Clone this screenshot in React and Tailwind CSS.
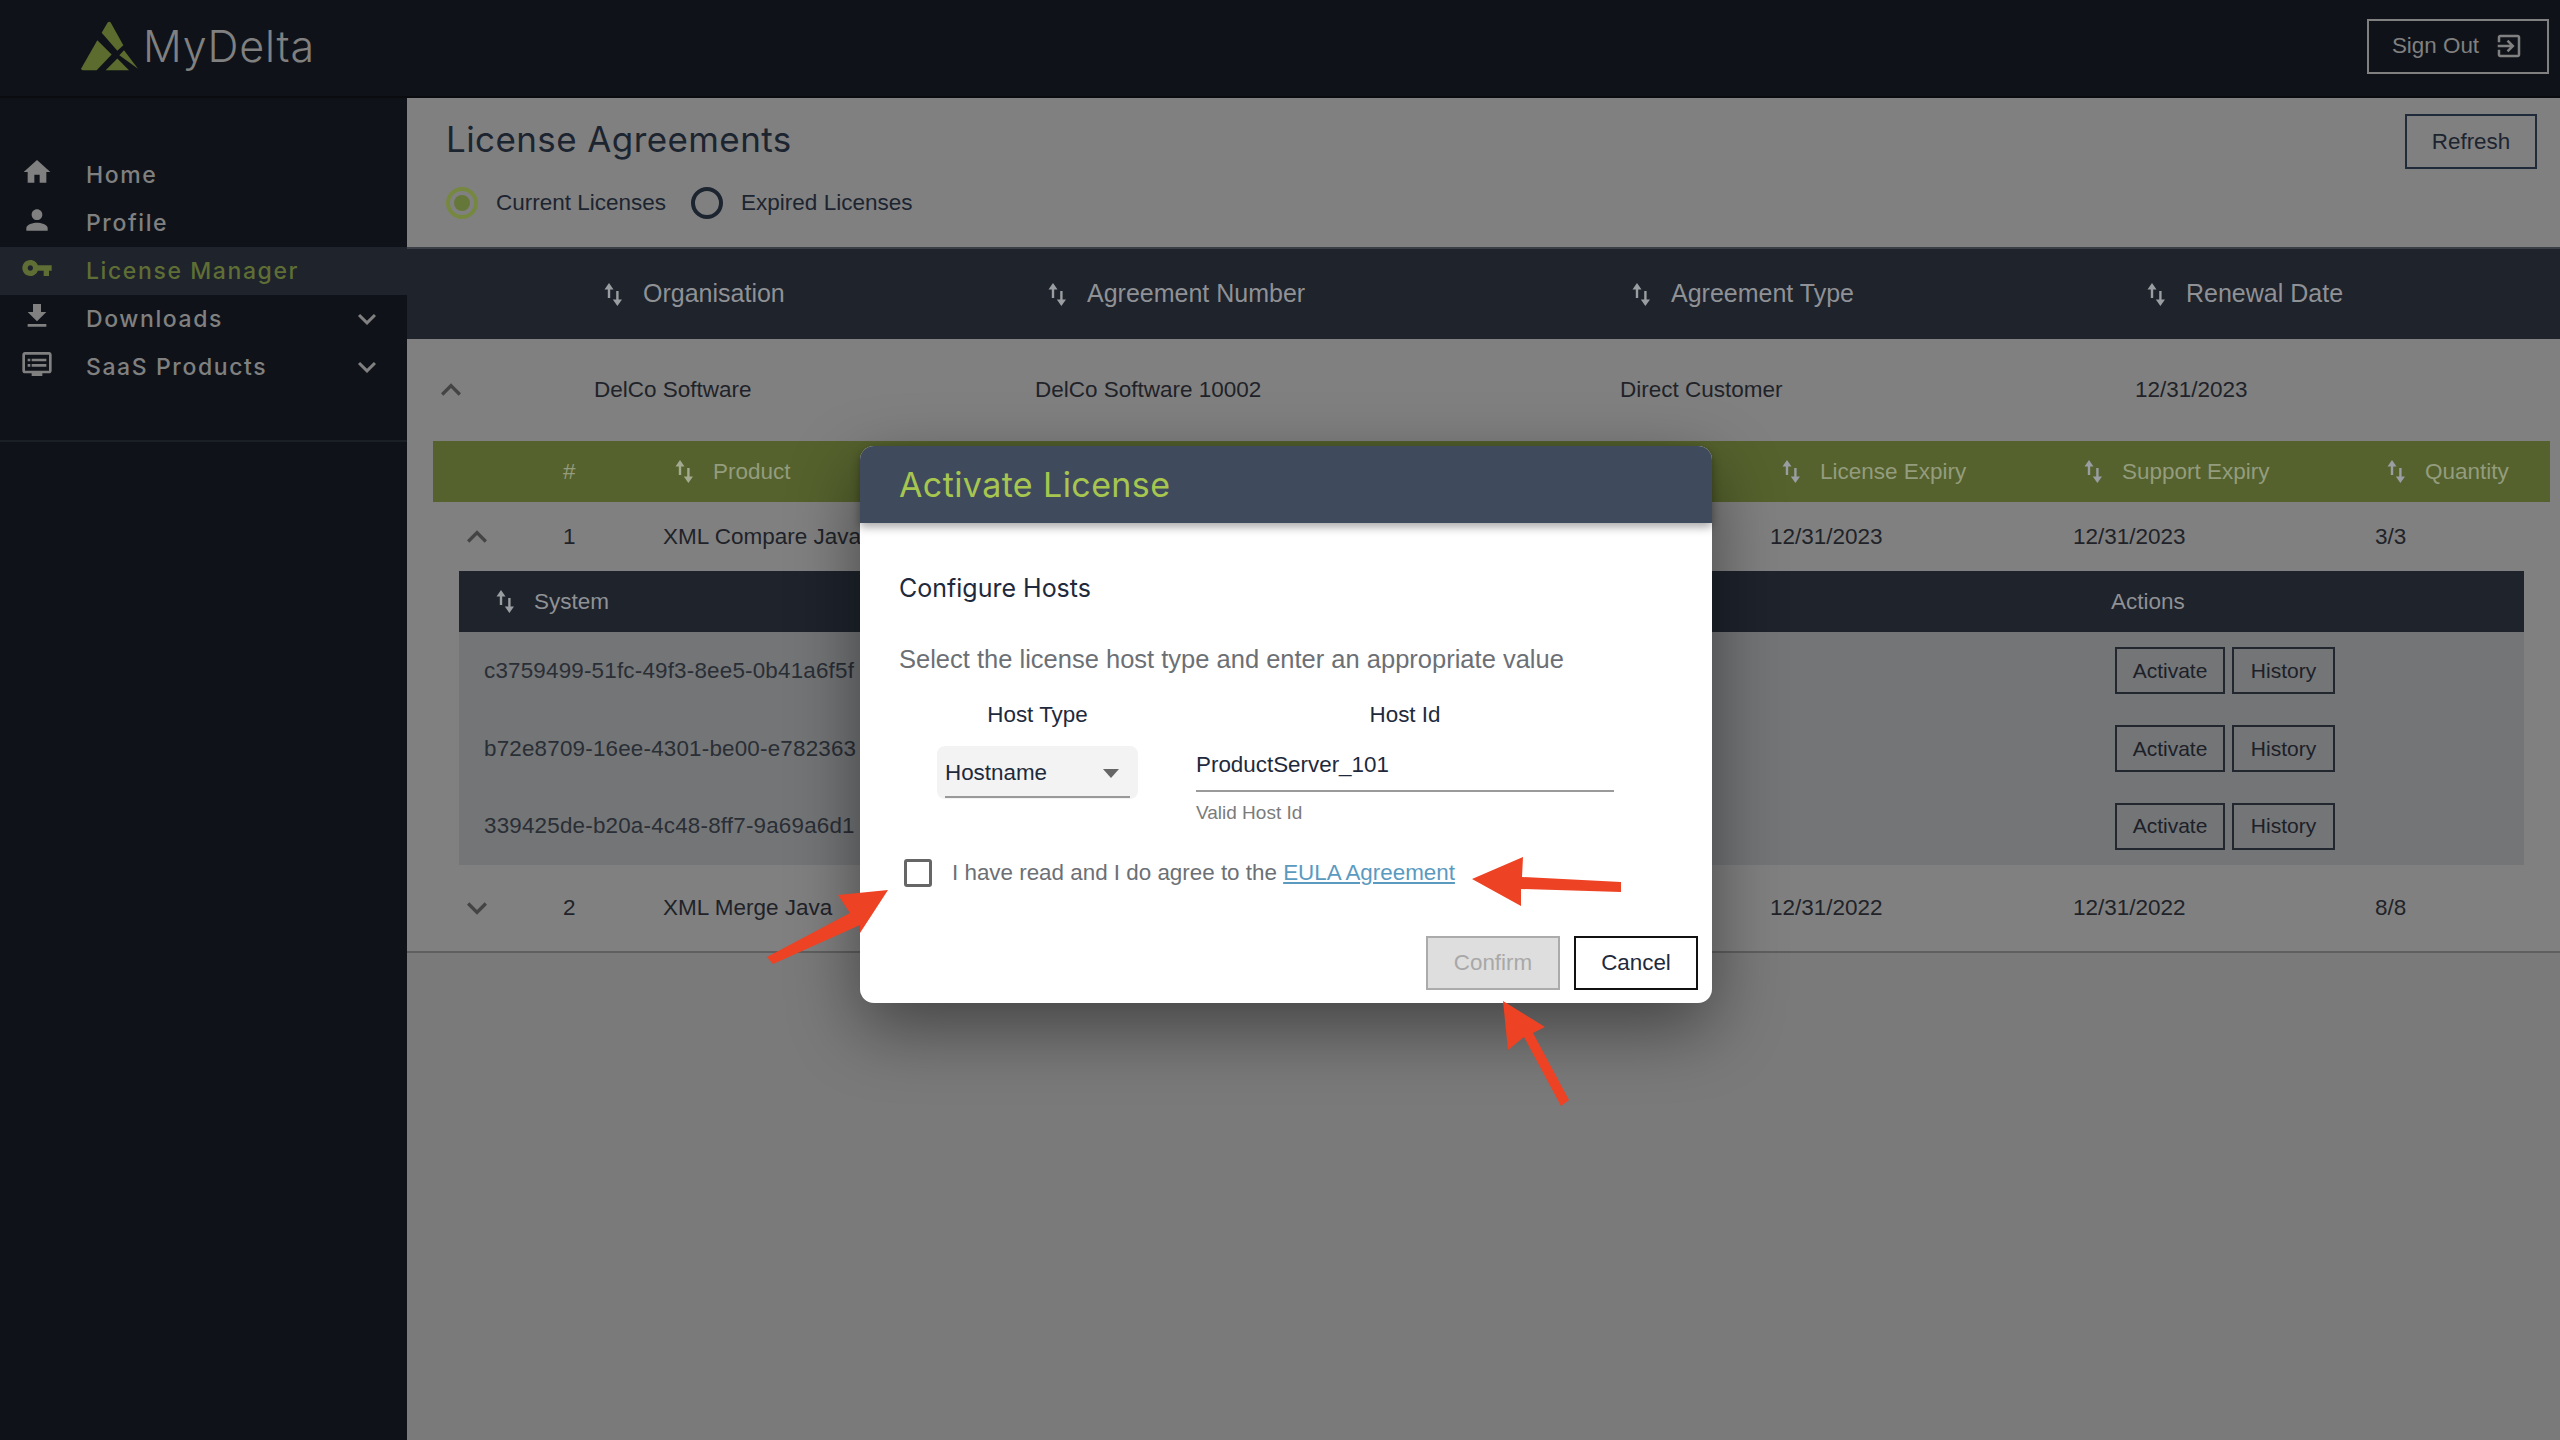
const sans = "font-['Liberation_Sans',Arial,sans-serif]";
const round = "font-['Inter',sans-serif]";

const Mui = ({ d, className }) => (
  <svg viewBox="0 0 24 24" fill="currentColor" className={className}>
    <path d={d} />
  </svg>
);

const paths = {
  home: "M10 20v-6h4v6h5v-8h3L12 3 2 12h3v8z",
  person:
    "M12 12c2.21 0 4-1.79 4-4s-1.79-4-4-4-4 1.79-4 4 1.79 4 4 4zm0 2c-2.67 0-8 1.34-8 4v2h16v-2c0-2.66-5.33-4-8-4z",
  key: "M12.65 10C11.83 7.67 9.61 6 7 6c-3.31 0-6 2.69-6 6s2.69 6 6 6c2.61 0 4.83-1.67 5.65-4H17v4h4v-4h2v-4H12.65zM7 14c-1.1 0-2-.9-2-2s.9-2 2-2 2 .9 2 2-.9 2-2 2z",
  download: "M19 9h-4V3H9v6H5l7 7 7-7zM5 18v2h14v-2H5z",
  dvr: "M21 3H3c-1.1 0-2 .9-2 2v12c0 1.1.9 2 2 2h5v2h8v-2h5c1.1 0 1.99-.9 1.99-2L23 5c0-1.1-.9-2-2-2zm0 14H3V5h18v12zm-2-9H8v2h11V8zm0 4H8v2h11v-2zM7 8H5v2h2V8zm0 4H5v2h2v-2z",
  down: "M16.59 8.59L12 13.17 7.41 8.59 6 10l6 6 6-6z",
  up: "M12 8l-6 6 1.41 1.41L12 10.83l4.59 4.58L18 14z",
  exit: "M10.09 15.59L11.5 17l5-5-5-5-1.41 1.41L12.67 11H3v2h9.67l-2.58 2.59zM19 3H5c-1.11 0-2 .9-2 2v4h2V5h14v14H5v-4H3v4c0 1.1.89 2 2 2h14c1.1 0 2-.9 2-2V5c0-1.1-.9-2-2-2z",
};

const SortIcon = ({ className }) => (
  <svg viewBox="0 0 18 23" fill="currentColor" className={`w-[18px] h-[23px] shrink-0 ${className}`}>
    <path d="M0.5 6.5L5 0l4.5 6.5H6.2V15H3.8V6.5z" />
    <path d="M12.2 8h2.4v8.5H18L13.4 23l-4.6-6.5h3.4z" />
  </svg>
);

const Logo = () => (
  <svg viewBox="60 60 180 155" className="w-[60px] h-[52px]" fill="#5c6c2f">
    <path d="M125 98L143 67q5-5 9 0L190 135 172 152z" />
    <path d="M112 120L155 163 110 210H68q-6-1-4-6z" />
    <path d="M172 175L207 210H137z" />
    <path d="M178 165L192 150 234 206z" />
  </svg>
);

const NavItem = ({ icon, label, active, chevron }) => (
  <div className={`flex items-center h-[48px] ${active ? "bg-[#1e232c] text-[#5f6e34]" : "text-[#808080]"}`}>
    <div className="w-[86px] pl-[21px] -mt-[6px]">
      <Mui d={icon} className="w-[32px] h-[32px]" />
    </div>
    <span className={`${round} text-[23px] font-medium tracking-[1.6px] flex-1`}>{label}</span>
    {chevron && <Mui d={paths.down} className="w-[36px] h-[36px] mr-[22px] text-[#808080]" />}
  </div>
);

const Sidebar = () => (
  <aside className="w-[407px] shrink-0 bg-[#0f1319]">
    <nav className="pt-[53px] pb-[49px] border-b-2 border-[#1a1e25]">
      <NavItem icon={paths.home} label="Home" />
      <NavItem icon={paths.person} label="Profile" />
      <NavItem icon={paths.key} label="License Manager" active />
      <NavItem icon={paths.download} label="Downloads" chevron />
      <NavItem icon={paths.dvr} label="SaaS Products" chevron />
    </nav>
  </aside>
);

const Radio = ({ checked, label }) => (
  <label className="flex items-center gap-[18px]">
    <span
      className={`w-[32px] h-[32px] rounded-full border-[4px] flex items-center justify-center ${
        checked ? "border-[#76883f]" : "border-[#1c2430]"
      }`}
    >
      {checked && <span className="w-[16px] h-[16px] rounded-full bg-[#66773a]" />}
    </span>
    <span className="text-[22.5px] text-[#1c2430]">{label}</span>
  </label>
);

const HeadCell = ({ label, offset }) => (
  <div className={`flex items-center gap-[21px] ${offset}`}>
    <SortIcon className="text-[#9a9da1]" />
    <span>{label}</span>
  </div>
);

const topCols = "grid grid-cols-[187px_441px_585px_515px_1fr] items-center";
const subCols = "grid grid-cols-[130px_100px_1107px_303px_302px_1fr] items-center";

const ActionButton = ({ children, className }) => (
  <button className={`h-[47px] border-2 border-[#22262e] text-[21px] text-[#1c2028] ${className}`}>{children}</button>
);

const SystemRow = ({ id }) => (
  <div className="flex items-center h-[77.67px]">
    <span className="flex-1 pl-[25px] text-[22.4px] text-[#2a2e35] tracking-[0.2px]">{id}</span>
    <div className="w-[413px] pl-[4px] flex gap-[7px]">
      <ActionButton className="w-[110px]">Activate</ActionButton>
      <ActionButton className="w-[103px]">History</ActionButton>
    </div>
  </div>
);

const LicenseTable = () => (
  <section className="bg-[#808080] border-b-2 border-[#5f5f5f]">
    <div className={`${topCols} h-[92px] bg-[#1e232c] text-[25px] text-[#8f9195] border-t-2 border-[#3a3e45]`}>
      <div />
      <HeadCell label="Organisation" offset="ml-[10px]" />
      <HeadCell label="Agreement Number" offset="ml-[13px]" />
      <HeadCell label="Agreement Type" offset="ml-[12px]" />
      <HeadCell label="Renewal Date" offset="ml-[12px]" />
    </div>
    <div className={`${topCols} h-[102px] text-[22.5px] text-[#1f2329]`}>
      <div className="pl-[24px]">
        <Mui d={paths.up} className="w-[40px] h-[40px] text-[#444]" />
      </div>
      <span>DelCo Software</span>
      <span>DelCo Software 10002</span>
      <span>Direct Customer</span>
      <span>12/31/2023</span>
    </div>
    <div className="ml-[26px] w-[2117px]">
      <div className={`${subCols} h-[61px] bg-[#55622d] text-[22.5px] text-[#949c7e]`}>
        <div />
        <span>#</span>
        <div className="flex items-center gap-[20px] ml-[12px]">
          <SortIcon className="text-[#a4aa90]" />
          <span>Product</span>
        </div>
        <HeadCell label="License Expiry" offset="ml-[12px] !gap-[20px]" />
        <HeadCell label="Support Expiry" offset="ml-[11px] !gap-[20px]" />
        <HeadCell label="Quantity" offset="ml-[12px] !gap-[20px]" />
      </div>
      <div className={`${subCols} h-[69px] text-[22.5px] text-[#1f2329]`}>
        <div className="pl-[24px]">
          <Mui d={paths.up} className="w-[40px] h-[40px] text-[#444]" />
        </div>
        <span>1</span>
        <span>XML Compare Java</span>
        <span>12/31/2023</span>
        <span>12/31/2023</span>
        <span>3/3</span>
      </div>
      <div className="ml-[26px] w-[2065px]">
        <div className="flex items-center h-[61px] bg-[#1e232c] text-[22.5px] text-[#8f9195]">
          <div className="flex-1 flex items-center gap-[20px] pl-[37px]">
            <SortIcon className="text-[#9a9da1]" />
            <span>System</span>
          </div>
          <span className="w-[413px]">Actions</span>
        </div>
        <div className="bg-[#737577]">
          <SystemRow id="c3759499-51fc-49f3-8ee5-0b41a6f5f" />
          <SystemRow id="b72e8709-16ee-4301-be00-e782363" />
          <SystemRow id="339425de-b20a-4c48-8ff7-9a69a6d1" />
        </div>
      </div>
      <div className={`${subCols} h-[86px] text-[22.5px] text-[#1f2329]`}>
        <div className="pl-[24px]">
          <Mui d={paths.down} className="w-[40px] h-[40px] text-[#444]" />
        </div>
        <span>2</span>
        <span>XML Merge Java</span>
        <span>12/31/2022</span>
        <span>12/31/2022</span>
        <span>8/8</span>
      </div>
    </div>
  </section>
);

const ActivateDialog = () => (
  <div className={`absolute left-[860px] top-[446px] w-[852px] h-[557px] bg-white rounded-[14px] shadow-[0_24px_70px_rgba(0,0,0,0.45)] ${sans}`}>
    <div className="h-[77px] bg-[#3f4b5c] rounded-t-[14px] pl-[39px] flex items-center shadow-[0_4px_10px_rgba(0,0,0,0.35)]">
      <h2 className={`${round} text-[34px] text-[#a7c64f] tracking-[0.4px]`}>Activate License</h2>
    </div>
    <div className="pl-[39px] pr-[14px]">
      <h3 className={`${round} text-[25px] text-[#1e2a3c] mt-[46px] leading-[38px]`}>Configure Hosts</h3>
      <p className="text-[25.5px] text-[#6c7075] mt-[34px] leading-[36px]">
        Select the license host type and enter an appropriate value
      </p>
      <div className="flex mt-[22px] ml-[38px]">
        <div className="w-[201px] flex flex-col">
          <span className="text-[22.4px] text-[#1e2a3c] text-center leading-[32px]">Host Type</span>
          <div className="relative mt-[15px] h-[53px] bg-[#f3f3f3] rounded-[8px] flex items-center pl-[8px] text-[22.4px] text-[#1e2a3c]">
            <span>Hostname</span>
            <svg viewBox="0 0 16 9" className="absolute right-[19px] top-[23px] w-[16px] h-[9px]" fill="#666">
              <path d="M0 0h16L8 9z" />
            </svg>
            <div className="absolute left-[8px] right-[8px] bottom-[1px] h-[2px] bg-[#999]" />
          </div>
        </div>
        <div className="ml-[58px] w-[418px] flex flex-col">
          <span className="text-[22.4px] text-[#1e2a3c] text-center leading-[32px]">Host Id</span>
          <div className="mt-[15px] h-[46px] border-b-2 border-[#9a9a9a] text-[22.4px] text-[#1e2a3c] flex items-center pb-[6px]">
            ProductServer_101
          </div>
          <span className="text-[19px] text-[#7b7b7b] mt-[8px] leading-[26px]">Valid Host Id</span>
        </div>
      </div>
      <div className="flex items-center mt-[30px] ml-[5px]">
        <span className="w-[28px] h-[28px] border-[3px] border-[#666] rounded-[3px]" />
        <span className="ml-[20px] text-[22.4px] text-[#6c7075]">
          I have read and I do agree to the{" "}
          <a className="text-[#5b9abf] underline">EULA Agreement</a>
        </span>
      </div>
      <div className="flex justify-end gap-[14px] mt-[46px]">
        <button className="w-[134px] h-[54px] bg-[#dedede] border-2 border-[#ababab] text-[22.4px] text-[#a8a8a8]">
          Confirm
        </button>
        <button className="w-[124px] h-[54px] bg-white border-2 border-[#111] text-[22.4px] text-[#1e2a3c]">
          Cancel
        </button>
      </div>
    </div>
  </div>
);

// red annotation arrows sit on top of the whole page
const Arrows = () => (
  <svg className="absolute inset-0 w-[2560px] h-[1440px] pointer-events-none" viewBox="0 0 2560 1440" fill="#ee4224">
    <path d="M1472 879L1523 857 1522 877 1621 882 1621 892 1521 889 1521 906z" />
    <path d="M888 890L838 895 850 913 767 957 773 964 860 925 860 933z" />
    <path d="M1503 1001L1545 1027 1533 1033 1569 1100 1561 1106 1524 1037 1508 1050z" />
  </svg>
);

export default function App() {
  return (
    <div className={`relative w-[2560px] h-[1440px] overflow-hidden bg-[#7a7a7a] ${sans}`}>
      <header className="h-[98px] bg-[#0f1319] border-b-2 border-[#090b0e] flex items-center justify-between pl-[80px] pr-[11px]">
        <div className="flex items-center gap-[3px] -mt-[4px]">
          <Logo />
          <span className={`${round} text-[43px] font-light text-[#808080] tracking-[0.8px]`}>MyDelta</span>
        </div>
        <button className="w-[182px] h-[55px] border-2 border-[#808080] text-[#808080] text-[22.4px] flex items-center justify-center gap-[15px] -mt-[4px]">
          Sign Out
          <Mui d={paths.exit} className="w-[30px] h-[30px]" />
        </button>
      </header>
      <div className="flex h-[1342px]">
        <Sidebar />
        <main className="flex-1 min-w-0">
          <div className="h-[149px] bg-[#808080] flex justify-between pl-[39px] pr-[23px]">
            <div>
              <h1 className={`${round} text-[35px] text-[#1c2430] mt-[18px] leading-[46px] tracking-[0.4px]`}>
                License Agreements
              </h1>
              <div className="flex gap-[25px] mt-[24px]">
                <Radio checked label="Current Licenses" />
                <Radio label="Expired Licenses" />
              </div>
            </div>
            <button className="w-[132px] h-[55px] mt-[16px] border-2 border-[#1f2a3a] text-[22.4px] text-[#1c2430]">
              Refresh
            </button>
          </div>
          <LicenseTable />
        </main>
      </div>
      <ActivateDialog />
      <Arrows />
    </div>
  );
}
